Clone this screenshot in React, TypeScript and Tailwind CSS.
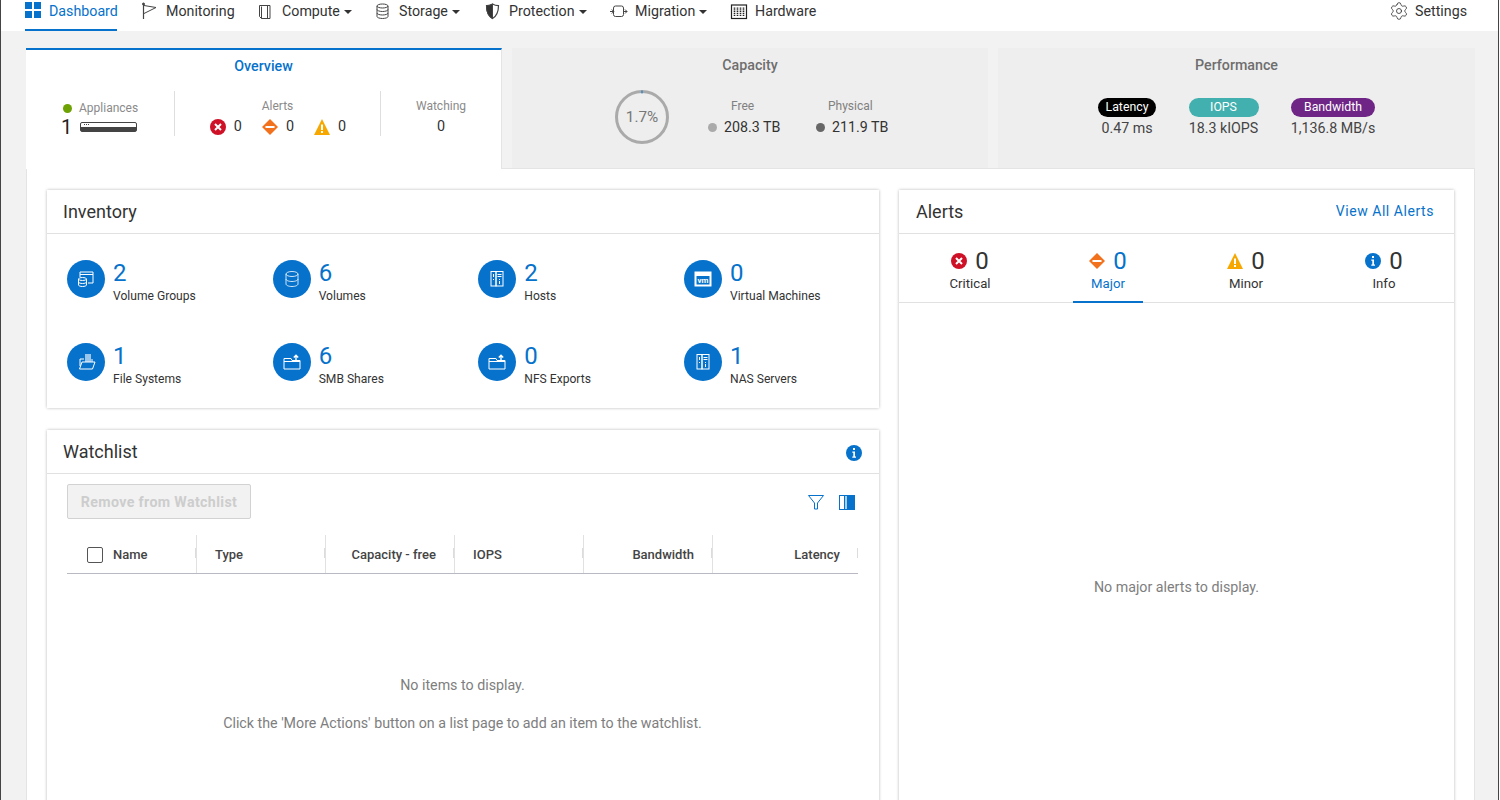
import React from "react";
import { Settings } from "lucide-react";

const BLUE = "#0672cb";

const Critical = ({ s = 16 }: { s?: number }) => (
  <svg width={s} height={s} viewBox="0 0 16 16" className="shrink-0"><circle cx="8" cy="8" r="8" fill="#ce1126" /><path d="M5 5l6 6M11 5l-6 6" stroke="#fff" strokeWidth="2" /></svg>
);
const Major = ({ s = 16 }: { s?: number }) => (
  <svg width={s} height={s} viewBox="0 0 16 16" className="shrink-0"><path d="M8 0l8 8-8 8-8-8z" fill="#f2711c" /><rect x="3.5" y="7" width="9" height="2" fill="#fff" /></svg>
);
const Minor = ({ s = 16 }: { s?: number }) => (
  <svg width={s} height={s} viewBox="0 0 16 16" className="shrink-0"><path d="M8 0l8 16H0z" fill="#f7a800" /><rect x="7" y="5.5" width="2" height="5.5" fill="#fff" /><rect x="7" y="12" width="2" height="2" fill="#fff" /></svg>
);
const Info = ({ s = 16 }: { s?: number }) => (
  <svg width={s} height={s} viewBox="0 0 16 16" className="shrink-0"><circle cx="8" cy="8" r="8" fill={BLUE} /><rect x="7" y="3" width="2" height="2" fill="#fff" /><path d="M6.3 6.5H9v5h1v1.2H6.3v-1.2h1V7.7h-1z" fill="#fff" /></svg>
);

const NavIcon = ({ children }: { children: React.ReactNode }) => (
  <svg width="18" height="18" viewBox="0 0 18 18" fill="none" stroke="#444" strokeWidth="1" className="shrink-0 overflow-visible">{children}</svg>
);
const Caret = () => <span className="ml-[4px] inline-block w-0 h-0 border-x-[4px] border-x-transparent border-t-[4px] border-t-[#333]" />;

const NavItem = ({ icon, label, caret, width }: { icon: React.ReactNode; label: string; caret?: boolean; width: string }) => (
  <div className={`flex items-center h-[22px] gap-[6px] ${width}`}>
    {icon}
    <span className="flex items-center text-[14.24px] text-[#333] translate-y-[1px]">{label}{caret && <Caret />}</span>
  </div>
);

const Stat = ({ icon, n, label }: { icon: React.ReactNode; n: string; label: string }) => (
  <div className="flex gap-[8px] h-[83px]">
    <div className="w-[38px] h-[38px] rounded-full bg-[#0672cb] flex items-center justify-center shrink-0">
      <svg width="22" height="22" viewBox="0 0 22 22" fill="none" stroke="#fff" strokeWidth="1">{icon}</svg>
    </div>
    <div className="-mt-[1px]">
      <div className="text-[24px] leading-[28px] text-[#0672cb]">{n}</div>
      <div className="text-[12.1px] leading-[16px] mt-[1px] text-[#333]">{label}</div>
    </div>
  </div>
);

const hostIcon = (
  <>
    <rect x="5" y="3.5" width="5" height="14.5" />
    <rect x="10" y="3.5" width="7" height="14.5" />
    <path d="M7.5 6v3M7.5 11v1M11.5 6.5h4M11.5 8.5h4M13.5 11v1M13.5 13v3" />
  </>
);
const shareIcon = (
  <>
    <path d="M3 7.5h7l1 2h8v8.5H3z" />
    <path d="M3 10.500h16" />
    <path d="M15 10V4.500M12.800 6.500L15 4.200l2.200 2.300" strokeWidth="1.400" />
  </>
);

const Handle = () => <span className="absolute right-0 top-[13px] w-[1px] h-[10px] bg-[#dcdcdc]" />;

const Th = ({ w, label, right, pl }: { w: string; label: string; right?: boolean; pl?: string }) => (
  <div className={`relative h-[38px] pt-[2px] ${w} flex items-center ${right ? "justify-end pr-[18px]" : ""} ${pl ?? ""} border-r border-[#e1e1e1]`}>
    <span className="text-[13px] font-medium text-[#444]">{label}</span>
    <Handle />
  </div>
);

const Tab = ({ title, children, w }: { title: string; children: React.ReactNode; w: string }) => (
  <div className={`${w} h-[120px] bg-[#eeeeee] shrink-0`}>
    <div className="text-center text-[14.24px] font-medium text-[#6e6e6e] pt-[7px] leading-[20px]">{title}</div>
    {children}
  </div>
);

const Pill = ({ label, value, color, w }: { label: string; value: string; color: string; w: string }) => (
  <div className={`flex flex-col items-center ${w}`}>
    <div className={`h-[19px] w-full rounded-full ${color} text-white text-[12.3px] leading-[19px] text-center`}>{label}</div>
    <div className="text-[14.24px] leading-[20px] mt-[1px] text-[#444] whitespace-nowrap">{value}</div>
  </div>
);

const AlertTab = ({ icon, label, active }: { icon: React.ReactNode; label: string; active?: boolean }) => (
  <div className={`w-[70px] h-[69px] flex flex-col items-center pt-[13px] ${active ? "border-b-2 border-[#0672cb]" : ""}`}>
    <div className="flex items-center gap-[8px] h-[28px] whitespace-nowrap">
      {icon}
      <span className={`text-[24px] ${active ? "text-[#0672cb]" : "text-[#333]"}`}>0</span>
    </div>
    <span className={`text-[13.2px] leading-[16px] mt-[1px] ${active ? "text-[#0672cb]" : "text-[#333]"}`}>{label}</span>
  </div>
);

export default function App() {
  return (
    <div className="w-[1500px] h-[800px] overflow-hidden bg-white text-[#333] font-['Roboto',sans-serif] flex">
      <div className="w-[1px] h-full bg-[#444] shrink-0" />
      <div className="w-[1497px] h-full flex flex-col shrink-0">
        <nav className="h-[31px] bg-white flex pl-[24px] pr-[31px] shrink-0">
          <div className="flex items-start w-[92px] h-[31px] border-b-2 border-[#0672cb] gap-[8px]">
            <svg width="16" height="16" viewBox="0 0 16 16" className="shrink-0 mt-[2px]"><path d="M0 0h7v7H0zM9 0h7v7H9zM0 9h7v7H0zM9 9h7v7H9z" fill={BLUE} /></svg>
            <span className="text-[14.24px] text-[#0672cb] leading-[22px]">Dashboard</span>
          </div>
          <div className="flex items-start ml-[25px]">
            <NavItem width="w-[116px]" label="Monitoring" icon={<NavIcon><circle cx="1.500" cy="2" r="1" fill="#444" /><path d="M1.500 2v15" strokeWidth="1.200" /><path d="M2 3.500l12 2-12 6" /></NavIcon>} />
            <NavItem width="w-[117px]" label="Compute" caret icon={<NavIcon><path d="M1.500 3.500h10.500v13H3.500l-2-2zM3.500 4.500v12M9.500 3.500v13" /></NavIcon>} />
            <NavItem width="w-[110px]" label="Storage" caret icon={<NavIcon><ellipse cx="7.500" cy="4" rx="5.500" ry="2" /><path d="M2 4v10.500c0 1.100 2.500 2 5.500 2s5.500-.9 5.500-2V4M2 7.500c0 1.100 2.500 2 5.500 2s5.500-.9 5.500-2M2 11c0 1.100 2.500 2 5.500 2s5.500-.9 5.500-2" /></NavIcon>} />
            <NavItem width="w-[126px]" label="Protection" caret icon={<NavIcon><path d="M7.500 2c2 1.200 4 1.600 6 1.600 0 6-1.500 10.400-6 13-4.500-2.600-6-7-6-13 2 0 4-.4 6-1.600z" strokeWidth="1.200" /><path d="M7.500 2c-2 1.200-4 1.600-6 1.600 0 6 1.500 10.400 6 13z" fill="#333" /></NavIcon>} />
            <NavItem width="w-[120px]" label="Migration" caret icon={<NavIcon><rect x="2.500" y="4" width="10" height="10.500" rx="2" /><path d="M-1 9.500h3.500M.8 7.500l2 2-2 2M12.500 9.500h3.500M14 7.500l2 2-2 2" /></NavIcon>} />
            <NavItem width="w-[100px]" label="Hardware" icon={<NavIcon><rect x=".5" y="3" width="15" height="13.500" stroke="#222" strokeWidth="1.200" /><path d="M3.500 5.500v9M6.500 5.500v9M9.500 5.500v9M12.500 5.500v9" stroke="#222" strokeWidth="1.600" strokeDasharray="1.200 .6" /></NavIcon>} />
          </div>
          <div className="ml-auto flex items-center h-[22px] gap-[6px]">
            <Settings size={20} strokeWidth={1} color="#333" className="shrink-0" />
            <span className="text-[14.24px] text-[#333] translate-y-[1px]">Settings</span>
          </div>
        </nav>

        <main className="flex-1 bg-[#f2f2f2] pl-[25px] pt-[17px] overflow-hidden">
          <div className="flex w-[1449px]">
            <div className="relative z-10 w-[476px] h-[121px] bg-white border-t-2 border-[#0672cb] border-r border-r-[#e4e4e4] shrink-0">
              <div className="text-center text-[14.24px] font-medium text-[#0672cb] pt-[6px] leading-[20px]">Overview</div>
              <div className="flex mt-[15px] h-[45px]">
                <div className="w-[149px] border-r border-[#dedede] pl-[37px]">
                  <div className="flex items-center gap-[7px] h-[20px] mt-[7px]">
                    <span className="w-[9px] h-[9px] rounded-full bg-[#6ea204]" />
                    <span className="text-[12px] text-[#8a8a8a]">Appliances</span>
                  </div>
                  <div className="flex items-center gap-[8px] h-[18px] -ml-[2px]">
                    <span className="text-[20px] leading-[18px] text-[#222]">1</span>
                    <div className="w-[57px] h-[10px] rounded-[2px] border border-[#444] bg-white flex flex-col">
                      <div className="flex-1 pl-[3px] pt-[1px]"><div className="w-[5px] h-[1px] border-t border-dotted border-[#444]" /></div>
                      <div className="h-[4px] bg-[#444]" />
                    </div>
                  </div>
                </div>
                <div className="w-[206px] border-r border-[#dedede] flex flex-col items-center">
                  <div className="text-[12px] leading-[16px] mt-[7px] text-[#8a8a8a]">Alerts</div>
                  <div className="flex items-center gap-[20px] mt-[2px] ml-[1px]">
                    <div className="flex items-center gap-[8px]"><Critical /><span className="text-[14.4px] text-[#333]">0</span></div>
                    <div className="flex items-center gap-[8px]"><Major /><span className="text-[14.4px] text-[#333]">0</span></div>
                    <div className="flex items-center gap-[8px]"><Minor /><span className="text-[14.4px] text-[#333]">0</span></div>
                  </div>
                </div>
                <div className="w-[120px] flex flex-col items-center">
                  <div className="text-[12px] leading-[16px] mt-[7px] text-[#8a8a8a]">Watching</div>
                  <div className="text-[14.4px] text-[#333] mt-[2px]">0</div>
                </div>
              </div>
            </div>
            <div className="w-[10px] shrink-0" />
            <Tab w="w-[476px]" title="Capacity">
              <div className="flex mt-[15px] pl-[103px]">
                <div className="relative w-[54px] h-[54px] shrink-0">
                  <svg width="54" height="54" viewBox="0 0 54 54"><circle cx="27" cy="27" r="25.500" fill="none" stroke="#aaaaaa" strokeWidth="3" /><path d="M27 .5v3" stroke={BLUE} strokeWidth="1" /></svg>
                  <span className="absolute inset-0 flex items-center justify-center text-[15.3px] text-[#777]">1.7%</span>
                </div>
                <div className="flex flex-col ml-[39px] w-[108px] mt-[8px]">
                  <span className="text-[12px] leading-[16px] text-[#808080] ml-[23px]">Free</span>
                  <div className="flex items-center gap-[7px] mt-[3px]"><span className="w-[9px] h-[9px] rounded-full bg-[#aaaaaa]" /><span className="text-[14.24px] text-[#333]">208.3 TB</span></div>
                </div>
                <div className="flex flex-col mt-[8px]">
                  <span className="text-[12px] leading-[16px] text-[#808080] ml-[12px]">Physical</span>
                  <div className="flex items-center gap-[7px] mt-[3px]"><span className="w-[9px] h-[9px] rounded-full bg-[#666666]" /><span className="text-[14.24px] text-[#333]">211.9 TB</span></div>
                </div>
              </div>
            </Tab>
            <div className="w-[10px] shrink-0" />
            <Tab w="w-[477px]" title="Performance">
              <div className="flex mt-[23px] pl-[100px] items-start gap-[32.5px]">
                <Pill label="Latency" value="0.47 ms" color="bg-black" w="w-[58px]" />
                <Pill label="IOPS" value="18.3 kIOPS" color="bg-[#42b0ae]" w="w-[70px]" />
                <Pill label="Bandwidth" value="1,136.8 MB/s" color="bg-[#6e2585]" w="w-[84px]" />
              </div>
            </Tab>
          </div>

          <div className="w-[1449px] h-[700px] bg-white pl-[20px] pt-[21px] flex gap-[20px] border-t border-x border-[#e4e4e4] -mt-[1px] relative">
            <div className="w-[832px] shrink-0 flex flex-col gap-[22px]">
              <section className="h-[218px] bg-white shadow-[0_0_3px_rgba(0,0,0,0.28)] shrink-0">
                <div className="h-[44px] border-b border-[#e1e1e1] flex items-center px-[16px] text-[18px] text-[#333]">Inventory</div>
                <div className="pl-[20px] pt-[26px] grid grid-cols-[repeat(4,205.67px)]">
                  <Stat n="2" label="Volume Groups" icon={<><path d="M5 9V4h13v11h-5" /><path d="M5 6.500h13" /><ellipse cx="7.500" cy="11" rx="4" ry="1.500" /><path d="M3.500 11v6c0 .8 1.800 1.500 4 1.500s4-.7 4-1.500v-6M3.500 14c0 .8 1.800 1.500 4 1.500s4-.7 4-1.500" /></>} />
                  <Stat n="6" label="Volumes" icon={<><ellipse cx="11" cy="6" rx="6" ry="2.500" strokeOpacity=".8" /><path d="M5 6v10c0 1.400 2.700 2.500 6 2.500s6-1.100 6-2.500V6M5 11c0 1.400 2.700 2.500 6 2.500s6-1.100 6-2.500" strokeOpacity=".8" /></>} />
                  <Stat n="2" label="Hosts" icon={hostIcon} />
                  <Stat n="0" label="Virtual Machines" icon={<><rect x="3" y="4" width="16" height="14" fill="#fff" /><rect x="4.500" y="8" width="13" height="8.500" fill="#0672cb" stroke="none" /><text x="11" y="15" fontSize="8" fontWeight="700" fill="#fff" stroke="none" textAnchor="middle" fontFamily="Roboto">vm</text></>} />
                  <Stat n="1" label="File Systems" icon={<><path d="M5 15V8h4" /><rect x="10" y="3" width="6" height="8" fill="#fff" fillOpacity=".6" stroke="none" /><path d="M4.500 18l2.500-7h13l-2.500 7zM17 11V8" /></>} />
                  <Stat n="6" label="SMB Shares" icon={shareIcon} />
                  <Stat n="0" label="NFS Exports" icon={shareIcon} />
                  <Stat n="1" label="NAS Servers" icon={hostIcon} />
                </div>
              </section>
              <section className="h-[400px] bg-white shadow-[0_0_3px_rgba(0,0,0,0.28)] shrink-0">
                <div className="h-[44px] border-b border-[#e1e1e1] flex items-center justify-between pl-[16px] pr-[17px] text-[18px] text-[#333]">
                  <span>Watchlist</span>
                  <span className="mt-[2px]"><Info /></span>
                </div>
                <div className="px-[20px] pt-[10px]">
                  <div className="flex items-start justify-between">
                    <button className="w-[184px] h-[35px] pt-[2px] border border-[#d2d2d2] rounded-[2px] bg-[#f2f2f2] text-[14.24px] font-bold tracking-[0.35px] text-[#cdcdcd]">Remove from Watchlist</button>
                    <div className="flex items-center gap-[15px] pr-[4px] mt-[11px]">
                      <svg width="16" height="15" viewBox="0 0 16 15" fill="none" stroke={BLUE}><path d="M.5.500h15L9.500 8v6h-3V8z" /></svg>
                      <svg width="16" height="15" viewBox="0 0 16 15"><rect x=".5" y=".5" width="15" height="14" fill="none" stroke={BLUE} /><rect x="5" y="0" width="1" height="15" fill={BLUE} /><rect x="8" y="0" width="8" height="15" fill={BLUE} /><rect x="6" y="1" width="2" height="13" fill="#a9d0f0" /></svg>
                    </div>
                  </div>
                  <div className="flex items-end w-[791px] mt-[15px] border-b border-[#b9b9c4] h-[40px]">
                    <div className="relative h-[38px] pt-[2px] w-[130px] flex items-center pl-[20px] gap-[10px] border-r border-[#e1e1e1]">
                      <span className="w-[16px] h-[16px] border border-[#555] rounded-[2px] bg-white" />
                      <span className="text-[13px] font-medium text-[#444]">Name</span>
                      <Handle />
                    </div>
                    <Th w="w-[129px]" label="Type" pl="pl-[18px]" />
                    <Th w="w-[129px]" label="Capacity - free" right />
                    <Th w="w-[129px]" label="IOPS" pl="pl-[18px]" />
                    <Th w="w-[129px]" label="Bandwidth" right />
                    <div className="relative h-[38px] pt-[2px] w-[145px] flex items-center justify-end pr-[18px]"><span className="text-[13px] font-medium text-[#444]">Latency</span><Handle /></div>
                  </div>
                  <div className="text-center text-[14.24px] text-[#7e7e7e] w-[791px]">
                    <div className="mt-[101px] leading-[20px]">No items to display.</div>
                    <div className="mt-[18px] leading-[20px]">Click the 'More Actions' button on a list page to add an item to the watchlist.</div>
                  </div>
                </div>
              </section>
            </div>
            <section className="w-[555px] h-[640px] bg-white shadow-[0_0_3px_rgba(0,0,0,0.28)] shrink-0 flex flex-col">
              <div className="h-[44px] border-b border-[#e1e1e1] flex items-center justify-between pl-[17px] pr-[20px] shrink-0">
                <span className="text-[18px] text-[#333]">Alerts</span>
                <span className="text-[14px] tracking-[0.55px] text-[#0672cb]">View All Alerts</span>
              </div>
              <div className="h-[69px] border-b border-[#e1e1e1] flex pl-[36px] gap-[68px] shrink-0">
                <AlertTab icon={<Critical />} label="Critical" />
                <AlertTab icon={<Major />} label="Major" active />
                <AlertTab icon={<Minor />} label="Minor" />
                <AlertTab icon={<Info />} label="Info" />
              </div>
              <div className="text-center text-[14.24px] text-[#7e7e7e] mt-[274px] leading-[20px]">No major alerts to display.</div>
            </section>
          </div>
        </main>
      </div>
      <div className="w-[1px] h-full bg-[#444] shrink-0" />
      <div className="flex-1 bg-white" />
    </div>
  );
}
